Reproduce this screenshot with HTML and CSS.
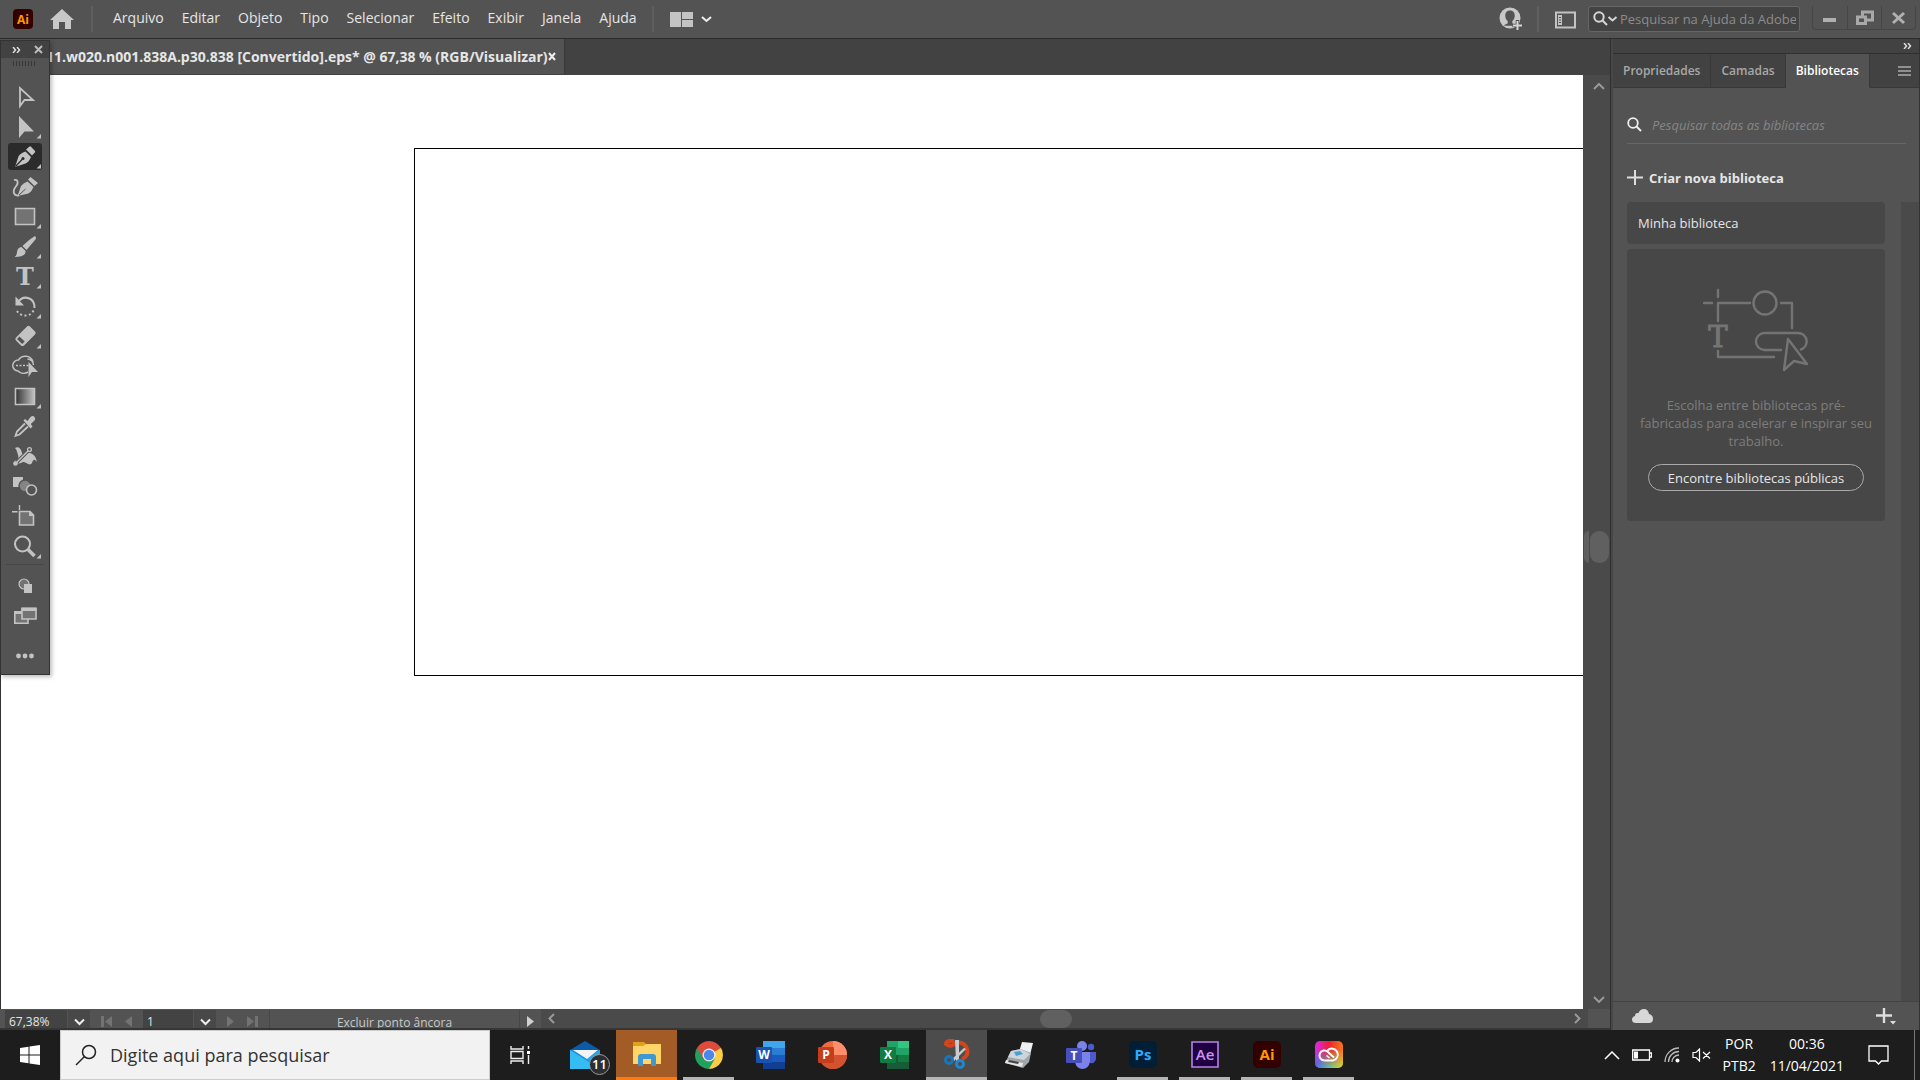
FILE: index.html
```html
<!DOCTYPE html>
<html lang="pt-BR">
<head>
  <meta charset="UTF-8">
  <title>Adobe Illustrator</title>
  <link rel="stylesheet" href="styles.css">
</head>
<body>
  <header class="app-bar">
    <svg class="app-logo" viewBox="0 0 20 20"><rect width="20" height="20" rx="4" fill="#330000"/><text x="10" y="15" text-anchor="middle" class="logo-text">Ai</text></svg>
    <button class="home-btn" aria-label="Início"><svg width="24" height="20" viewBox="0 0 24 20"><path d="M12 0L24 11H21V20H15V13H9V20H3V11H0Z" fill="#c8c8c8"/></svg></button>
    <span class="divider"></span>
    <nav class="menu">
      <button>Arquivo</button>
      <button>Editar</button>
      <button>Objeto</button>
      <button>Tipo</button>
      <button>Selecionar</button>
      <button>Efeito</button>
      <button>Exibir</button>
      <button>Janela</button>
      <button>Ajuda</button>
    </nav>
    <span class="divider"></span>
    <button class="arrange-btn" aria-label="Organizar documentos">
      <svg width="42" height="15" viewBox="0 0 42 15"><path d="M0 0H11V15H0ZM12 0H23V7H12ZM12 8H23V15H12Z" fill="#c3c3c3"/><path d="M32 5L36.500 9L41 5" fill="none" stroke="#eee" stroke-width="2"/></svg>
    </button>
    <div class="app-bar-right">
      <button class="user-btn" aria-label="Conta">
        <svg width="24" height="24" viewBox="0 0 24 24"><circle cx="11" cy="11" r="10.500" fill="#c8c8c8"/><path d="M11 3.500C7.500 3.500 6 6 6.300 9.500C6.500 12 8 13.500 8.700 14V16C8.500 17 6 17.500 4.500 18.300C6.500 19 15.500 19 17.500 18.300C16 17.500 13.500 17 13.300 16V14C14 13.500 15.500 12 15.700 9.500C16 6 14.500 3.500 11 3.500Z" fill="#535353"/><path d="M18.500 13V24M13.500 18.500H24" stroke="#535353" stroke-width="3.500"/><path d="M18.500 14V23M14 18.500H23" stroke="#d5d5d5" stroke-width="2"/></svg>
      </button>
      <span class="divider"></span>
      <button class="workspace-btn" aria-label="Área de trabalho">
        <svg width="21" height="18" viewBox="0 0 21 18"><path d="M1 1.500H20V16.500H1Z" fill="none" stroke="#c3c3c3" stroke-width="2"/><path d="M3 4H7V14H3Z" fill="#c3c3c3"/><path d="M4 6.500H6M4 9H6M4 11.500H6" stroke="#535353"/></svg>
      </button>
      <label class="help-search">
        <svg width="25" height="16" viewBox="0 0 25 16"><circle cx="6" cy="6" r="4.700" fill="none" stroke="#d5d5d5" stroke-width="2"/><path d="M9.500 9.500L14 14M15.500 6L19.500 9.500L23.500 6" fill="none" stroke="#d5d5d5" stroke-width="2"/></svg>
        <input type="text" placeholder="Pesquisar na Ajuda da Adobe" aria-label="Pesquisar na Ajuda da Adobe">
      </label>
      <div class="window-controls">
        <button aria-label="Minimizar"><svg width="14" height="16" viewBox="0 0 14 16"><path d="M0 10H13" stroke="#b0b0b0" stroke-width="4"/></svg></button>
        <button aria-label="Restaurar"><svg width="18" height="16" viewBox="0 0 18 16"><path d="M6.500 2H16.500V10H6.500Z" fill="none" stroke="#a8a8a8" stroke-width="3"/><path d="M1.500 7H9.500V13.500H1.500Z" fill="#535353" stroke="#a8a8a8" stroke-width="3"/></svg></button>
        <button aria-label="Fechar"><svg width="14" height="14" viewBox="0 0 14 14"><path d="M1 2L12 12M12 2L1 12" stroke="#b0b0b0" stroke-width="3"/></svg></button>
      </div>
    </div>
  </header>

  <main class="workspace">
    <section class="document">
      <div class="doc-tabs">
        <div class="doc-tab">
          <span class="doc-title">011.w020.n001.838A.p30.838 [Convertido].eps* @ 67,38 % (RGB/Visualizar)</span>
          <button aria-label="Fechar documento"><svg width="8" height="9" viewBox="0 0 8 9"><path d="M1 1L7 8M7 1L1 8" stroke="#eee" stroke-width="2"/></svg></button>
        </div>
      </div>
      <div class="doc-body">
        <div class="canvas"><div class="artboard"></div></div>
        <div class="scroll-v">
          <svg width="12" height="7" viewBox="0 0 12 7"><path d="M1 6L6 1L11 6" fill="none" stroke="#999" stroke-width="2"/></svg>
          <div class="thumb-v"><i></i><b></b></div>
          <svg width="12" height="7" viewBox="0 0 12 7"><path d="M1 1L6 6L11 1" fill="none" stroke="#999" stroke-width="2"/></svg>
        </div>
      </div>
      <div class="status-bar">
        <input class="zoom-level" type="text" value="67,38%" aria-label="Zoom">
        <button class="drop" aria-label="Níveis de zoom"><svg width="11" height="8" viewBox="0 0 11 8"><path d="M1 1.500L5.500 6L10 1.500" fill="none" stroke="#eee" stroke-width="2"/></svg></button>
        <div class="nav-prev">
          <button aria-label="Primeira"><svg width="11" height="11" viewBox="0 0 11 11"><path d="M0 0H3V11H0ZM11 0V11L4 5.500Z" fill="#737373"/></svg></button>
          <button aria-label="Anterior"><svg width="7" height="11" viewBox="0 0 7 11"><path d="M7 0V11L0 5.500Z" fill="#737373"/></svg></button>
        </div>
        <input class="page-number" type="text" value="1" aria-label="Prancheta">
        <button class="drop" aria-label="Pranchetas"><svg width="11" height="8" viewBox="0 0 11 8"><path d="M1 1.500L5.500 6L10 1.500" fill="none" stroke="#eee" stroke-width="2"/></svg></button>
        <div class="nav-next">
          <button aria-label="Próxima"><svg width="7" height="11" viewBox="0 0 7 11"><path d="M0 0V11L7 5.500Z" fill="#737373"/></svg></button>
          <button aria-label="Última"><svg width="11" height="11" viewBox="0 0 11 11"><path d="M8 0H11V11H8ZM0 0V11L7 5.500Z" fill="#737373"/></svg></button>
        </div>
        <span class="status-text">Excluir ponto âncora</span>
        <button class="status-more" aria-label="Mais"><svg width="7" height="11" viewBox="0 0 7 11"><path d="M0 0V11L7 5.500Z" fill="#d0d0d0"/></svg></button>
        <div class="scroll-h">
          <svg width="7" height="11" viewBox="0 0 7 11"><path d="M6 1L1.500 5.500L6 10" fill="none" stroke="#999" stroke-width="2"/></svg>
          <div class="thumb-h"></div>
          <svg width="7" height="11" viewBox="0 0 7 11"><path d="M1 1L5.500 5.500L1 10" fill="none" stroke="#999" stroke-width="2"/></svg>
        </div>
        <span class="corner"></span>
      </div>

      <!-- floating tool palette -->
      <aside class="tools">
        <div class="tools-head">
          <svg width="9" height="6" viewBox="0 0 9 6"><path d="M1 0L3.500 3L1 6M5 0L7.500 3L5 6" fill="none" stroke="#ddd" stroke-width="1.500"/></svg>
          <button aria-label="Fechar ferramentas"><svg width="9" height="9" viewBox="0 0 9 9"><path d="M1 1L8 8M8 1L1 8" stroke="#bbb" stroke-width="2"/></svg></button>
        </div>
        <div class="grip"></div>
        <div class="tool-list">
          <button aria-label="Seleção"><svg viewBox="0 0 34 27"><path d="M12 5V23L16.500 17H25Z" fill="none" stroke="#c3c3c3" stroke-width="1.800"/></svg></button>
          <button aria-label="Seleção direta"><svg viewBox="0 0 34 27"><path d="M11 3V25L16.500 18.500H26ZM33 21V25.500H28.500Z" fill="#c3c3c3"/></svg></button>
          <button class="active" aria-label="Caneta"><svg viewBox="0 0 34 27"><path d="M7 24L10.500 13.500Q12 10.500 17.500 8.500L23 14Q21 19 17.500 20.500ZM18 6.500L21.500 3.500Q22.300 3 23 3.700L27 8Q27.500 9 26.800 9.600L24 12.500ZM33 21V25.500H28.500Z" fill="#c3c3c3"/><path d="M7.500 23.500L14.500 16" stroke="#2b2b2b" stroke-width="1.200"/><circle cx="15" cy="15.500" r="1.500" fill="#2b2b2b"/></svg></button>
          <button aria-label="Curvatura"><svg viewBox="0 0 34 27"><path d="M9.500 23L13 13Q15 10 19.500 8.500L25.500 14Q24 18.500 20.500 20.500ZM20 6.500L22.500 4L30 10L26.500 13Z" fill="#c3c3c3"/><path d="M10.500 22.500L17.500 16" stroke="#535353"/><path d="M6 7C10 6 11 10 7.500 14C4 19 6 23 11 22.500" fill="none" stroke="#c3c3c3" stroke-width="1.800"/></svg></button>
          <button aria-label="Retângulo"><svg viewBox="0 0 34 27"><path d="M7.500 5.500H26.500V21.500H7.500Z" fill="#737373" stroke="#c3c3c3" stroke-width="1.600"/><path d="M33 21V25.500H28.500Z" fill="#c3c3c3"/></svg></button>
          <button aria-label="Pincel"><svg viewBox="0 0 34 27"><path d="M27 3Q29 5 27 7L18.500 17L14.500 13Q23 5 27 3ZM13.500 14L17.500 18Q18 24 6.500 24Q9 22.500 9 19Q9.500 14.500 13.500 14ZM33 21V25.500H28.500Z" fill="#c3c3c3"/></svg></button>
          <button class="type-tool" aria-label="Texto"><span>T</span><svg viewBox="0 0 34 27"><path d="M33 21V25.500H28.500Z" fill="#c3c3c3"/></svg></button>
          <button aria-label="Girar"><svg viewBox="0 0 34 27"><path d="M10 9C16 1 27 5 26.500 15" fill="none" stroke="#c3c3c3" stroke-width="2"/><path d="M7.500 3.500V12.500H16Z" fill="#c3c3c3"/><path d="M25.500 17.500C22 25 11 24 8 16" fill="none" stroke="#c3c3c3" stroke-width="2" stroke-dasharray="2 2.500"/><path d="M33 21V25.500H28.500Z" fill="#c3c3c3"/></svg></button>
          <button aria-label="Borracha"><svg viewBox="0 0 34 27"><path d="M19 3.500Q20.500 2 22 3.500L27 8.500Q28.500 10 27 11.500L16 22.500Q14.500 23.500 13 22.500L8 17.500Q6.500 16 8 14.500ZM33 21V25.500H28.500Z" fill="#c3c3c3"/><path d="M11.500 13.500L9 16L14.200 21L16.700 18.500Z" fill="#535353"/></svg></button>
          <button aria-label="Construtor de formas"><svg viewBox="0 0 34 27"><path d="M19.500 6A6 6 0 0 1 25.500 12M20 19A8 8 0 0 1 10 18A5.500 5.500 0 1 1 10.500 7A8 8 0 0 1 25 9" fill="none" stroke="#c3c3c3" stroke-width="1.500"/><path d="M8 12.500H21" stroke="#c3c3c3" stroke-width="1.500" stroke-dasharray="2 1.500"/><path d="M20.500 9V24L24 19H30Z" fill="#c3c3c3"/></svg></button>
          <button aria-label="Gradiente"><svg viewBox="0 0 34 27"><defs><linearGradient id="grad"><stop stop-color="#333"/><stop offset="1" stop-color="#c3c3c3"/></linearGradient></defs><path d="M7.500 5.500H26.500V21.500H7.500Z" fill="url(#grad)" stroke="#c3c3c3" stroke-width="1.600"/><path d="M33 21V25.500H28.500Z" fill="#c3c3c3"/></svg></button>
          <button aria-label="Conta-gotas"><svg viewBox="0 0 34 27"><path d="M17 10.500L9 18.500L7.500 22.800L11.500 21.500L20 13.500" fill="none" stroke="#c3c3c3" stroke-width="1.800"/><path d="M15.500 7.500L17 6L19.500 8L22.500 4Q25 2 26.500 4Q28 6 26.500 7.500L22.800 11L24.500 13.500L22.500 15.500Z" fill="#c3c3c3"/></svg></button>
          <button aria-label="Distorção de marionete"><svg viewBox="0 0 34 27"><path d="M7 5C11 3 13 6 14 10C15 13 18 9 22 10C26 11 28 14 29 19C26 15 25 17 24 20C21 24 18 18 15 19C12 21 9 21 6 18C10 18 11 15 10 12C9 9 9 7 7 5Z" fill="#c3c3c3"/><path d="M8 20L21 7" stroke="#535353" stroke-width="3.500"/><path d="M8 20L21 7" stroke="#c3c3c3" stroke-width="1.500"/><circle cx="7.500" cy="20.500" r="2.300" fill="#c3c3c3"/><circle cx="21.500" cy="6.500" r="1.900" fill="#535353" stroke="#c3c3c3" stroke-width="1.300"/></svg></button>
          <button aria-label="Mesclagem"><svg viewBox="0 0 34 27"><path d="M5 4H15V14H5Z" fill="#c3c3c3"/><circle cx="17" cy="13" r="6" fill="#737373" stroke="#535353" stroke-width="1.500"/><circle cx="17" cy="13" r="5" fill="#858585"/><circle cx="23.500" cy="17" r="5" fill="#535353" stroke="#c3c3c3" stroke-width="1.600"/></svg></button>
          <button aria-label="Prancheta"><svg viewBox="0 0 34 27"><path d="M11.500 8.500H22L25.500 12V22H11.500Z" fill="#737373" stroke="#c3c3c3" stroke-width="1.600"/><path d="M21 8V13H26ZM10.800 2H12.200V7H10.800ZM4 8H9.500V9.500H4Z" fill="#c3c3c3"/></svg></button>
          <button aria-label="Zoom"><svg viewBox="0 0 34 27"><circle cx="14.500" cy="11" r="7.500" fill="none" stroke="#c3c3c3" stroke-width="2"/><path d="M20 16.500L26.500 23" stroke="#c3c3c3" stroke-width="3.500"/><path d="M33 21V25.500H28.500Z" fill="#c3c3c3"/></svg></button>
        </div>
        <div class="tool-modes">
          <button aria-label="Modo de desenho"><svg viewBox="0 0 34 27"><circle cx="16" cy="11" r="5" fill="#737373" stroke="#c3c3c3" stroke-width="1.200"/><path d="M16 11H24V20H16Z" fill="#c3c3c3"/></svg></button>
          <button aria-label="Modo de tela"><svg viewBox="0 0 34 27"><path d="M6.800 9V20.200H20V9Z" fill="#737373" stroke="#c3c3c3" stroke-width="1.600"/><path d="M6 8H14V11H6Z" fill="#c3c3c3"/><path d="M14 5.500H28V16H14Z" fill="#737373" stroke="#c3c3c3" stroke-width="1.600"/><path d="M13.500 4.500H28.500V8H13.500Z" fill="#c3c3c3"/></svg></button>
        </div>
        <button class="more-tools" aria-label="Editar barra de ferramentas"><svg viewBox="0 0 34 27"><g fill="#c3c3c3"><circle cx="10.500" cy="13" r="2.400"/><circle cx="17" cy="13" r="2.400"/><circle cx="23.500" cy="13" r="2.400"/></g></svg></button>
      </aside>
    </section>

    <aside class="panel">
      <div class="panel-top"><svg width="9" height="6" viewBox="0 0 9 6"><path d="M1 0L3.500 3L1 6M5 0L7.500 3L5 6" fill="none" stroke="#ddd" stroke-width="1.500"/></svg></div>
      <div class="panel-tabs">
        <button>Propriedades</button>
        <button>Camadas</button>
        <button class="selected">Bibliotecas</button>
        <button class="panel-menu" aria-label="Menu do painel"><svg width="13" height="10" viewBox="0 0 13 10"><path d="M0 1H13M0 5H13M0 9H13" stroke="#aaa" stroke-width="1.500"/></svg></button>
      </div>
      <div class="panel-body">
        <label class="library-search">
          <svg width="15" height="15" viewBox="0 0 15 15"><circle cx="6" cy="6" r="4.800" fill="none" stroke="#eee" stroke-width="1.800"/><path d="M9.500 9.500L14 14" stroke="#eee" stroke-width="2"/></svg>
          <input type="text" placeholder="Pesquisar todas as bibliotecas" aria-label="Pesquisar todas as bibliotecas">
        </label>
        <button class="new-library"><svg width="16" height="16" viewBox="0 0 16 16"><path d="M8 0V15M0 7.500H16" stroke="#ddd" stroke-width="2"/></svg>Criar nova biblioteca</button>
        <div class="library-scroll">
          <div class="library-list">
            <button class="library-item">Minha biblioteca</button>
            <div class="discover">
              <svg class="discover-art" width="106" height="84" viewBox="0 0 106 84"><g fill="none" stroke="#747474" stroke-width="2.400" stroke-linecap="round" stroke-linejoin="round"><path d="M15 2V9M1 15H9M15 33V15H47M78 15H89V40M15 63V69H71"/><circle cx="62" cy="15" r="11.500"/><path d="M78 62H61.500A8.500 8.500 0 0 1 61.500 45H95A8.500 8.500 0 0 1 98 61.500"/><path d="M85 51L81 82L91 73L104 76Z"/></g><text x="15" y="59" text-anchor="middle" class="art-type">T</text></svg>
              <p>Escolha entre bibliotecas pré-fabricadas para acelerar e inspirar seu trabalho.</p>
              <button class="find-btn">Encontre bibliotecas públicas</button>
            </div>
          </div>
          <div class="library-track"></div>
        </div>
      </div>
      <div class="panel-footer">
        <svg width="21" height="14" viewBox="0 0 21 14"><path d="M4 14Q0 14 0 10.500Q0 8 3 7Q3 3.500 6.500 4Q8 0 12 0Q16 0 17 5Q21 6 21 10Q21 14 17 14Z" fill="#d8d8d8"/></svg>
        <button aria-label="Adicionar"><svg width="20" height="17" viewBox="0 0 20 17"><path d="M8 0V15M0 7.500H16" stroke="#ddd" stroke-width="2.400"/><path d="M14 13H20L17 16.500Z" fill="#ddd"/></svg></button>
      </div>
    </aside>
  </main>

  <footer class="taskbar">
    <button class="start" aria-label="Iniciar"><svg width="20" height="20" viewBox="0 0 20 20"><path d="M0 3L8.500 1.800V9.500H0ZM9.500 1.600L20 0V9.500H9.500ZM0 10.500H8.500V18.200L0 17ZM9.500 10.500H20V20L9.500 18.400Z" fill="#fff"/></svg></button>
    <label class="task-search">
      <svg width="22" height="22" viewBox="0 0 22 22"><circle cx="14" cy="8" r="6.500" fill="none" stroke="#222" stroke-width="1.500"/><path d="M9.500 12.500L1 21" stroke="#222" stroke-width="1.500"/></svg>
      <input type="text" placeholder="Digite aqui para pesquisar" aria-label="Digite aqui para pesquisar">
    </label>
    <button class="task-view" aria-label="Visão de tarefas"><svg width="20" height="20" viewBox="0 0 20 20"><path d="M1 1V4H13V1M1 19V16H13V19M1 6.500H13V13.500H1ZM18.500 1V4M18.500 10V19" fill="none" stroke="#eee" stroke-width="1.400"/><path d="M17 6H20V9H17Z" fill="#fff"/></svg></button>
    <div class="apps">
      <button class="app" aria-label="Email"><svg width="30" height="28" viewBox="0 0 30 28"><path d="M0 9L15 0L30 9Z" fill="#0a5ca8"/><path d="M0 9H30V28H0Z" fill="#1b93dc"/><path d="M0 9L30 28H0Z" fill="#35bdf3"/><path d="M30 9V28L17 18Z" fill="#29a5e6"/><path d="M3 9H28L17 18Z" fill="#f4f4f4"/></svg><span class="badge">11</span></button>
      <button class="app attention" aria-label="Explorador de Arquivos"><svg width="28" height="24" viewBox="0 0 28 24"><path d="M0 0H11L14 3V6H0Z" fill="#e2a11a"/><path d="M0 4H10L13 2H28V22H0Z" fill="#ffd667"/><path d="M5 24V15Q5 12 8 12H20Q23 12 23 15V24H18V17H10V24Z" fill="#4098d3"/></svg></button>
      <button class="app running" aria-label="Google Chrome"><svg width="28" height="28" viewBox="0 0 28 28"><path d="M14 14L1.900 7A14 14 0 0 1 26.100 7Z" fill="#dc4b3e"/><path d="M14 14L26.100 7A14 14 0 0 1 14 28Z" fill="#fdcd45"/><path d="M14 14V28A14 14 0 0 1 1.900 7Z" fill="#20a25d"/><path d="M14 7H26.100L20 17.500Z" fill="#fdcd45"/><path d="M20 17.500L14 28L8 17.500Z" fill="#20a25d"/><path d="M14 7H26L14 14L8 17L2 7Z" fill="#dc4b3e"/><circle cx="14" cy="14" r="6.500" fill="#eee"/><circle cx="14" cy="14" r="5.200" fill="#4a86ec"/></svg></button>
      <button class="app" aria-label="Word"><svg width="29" height="28" viewBox="0 0 29 28"><path d="M7 0H29V7H7Z" fill="#41a5ee"/><path d="M7 7H29V14H7Z" fill="#2b7cd3"/><path d="M7 14H29V21H7Z" fill="#185abd"/><path d="M7 21H29V28H7Z" fill="#103f91"/><rect y="6" width="16" height="16" rx="1" fill="#1a52b2"/><text x="8" y="18" text-anchor="middle" class="office-letter">W</text></svg></button>
      <button class="app" aria-label="PowerPoint"><svg width="29" height="28" viewBox="0 0 29 28"><circle cx="15" cy="14" r="14" fill="#ed6c47"/><path d="M15 0A14 14 0 0 1 29 14H15Z" fill="#ff8f6b"/><path d="M15 14H29A14 14 0 0 1 1 14Z" fill="#d35230"/><rect y="6" width="16" height="16" rx="1" fill="#c43e1c"/><text x="8" y="18" text-anchor="middle" class="office-letter">P</text></svg></button>
      <button class="app" aria-label="Excel"><svg width="29" height="28" viewBox="0 0 29 28"><path d="M7 0H18V14H7Z" fill="#21a366"/><path d="M18 0H29V7H18Z" fill="#33c481"/><path d="M18 7H29V14H18Z" fill="#21a366"/><path d="M7 14H29V28H7Z" fill="#185c37"/><path d="M18 14H29V21H18Z" fill="#107c41"/><rect y="6" width="16" height="16" rx="1" fill="#107c41"/><text x="8" y="18" text-anchor="middle" class="office-letter">X</text></svg></button>
      <button class="app current" aria-label="Ferramenta de Captura"><svg width="26" height="30" viewBox="0 0 26 30"><path d="M10 2Q2 1 2 5Q7 9 11 4Q20 2 23 10Q25 17 18 20" fill="none" stroke="#d5441b" stroke-width="4"/><path d="M11 1H15V21L12 22ZM22 10L10 22L8 20L20 9Z" fill="#c8ccd0"/><circle cx="5" cy="21" r="3.500" fill="none" stroke="#1976bd" stroke-width="3"/><circle cx="16" cy="25" r="3.500" fill="none" stroke="#2086ce" stroke-width="3"/></svg></button>
      <button class="app" aria-label="Fax e Scanner"><svg width="28" height="26" viewBox="0 0 28 26"><path d="M17 0L28 1L25 13L14 10Z" fill="#f0f0f0"/><path d="M6 9L16 7L26 11L24 20L18 26L0 21Z" fill="#a0a6aa"/><path d="M6 9L16 7L25 12L19 18L3 15Z" fill="#cdd5da"/><path d="M9 10L15 9L18 12L11 14Z" fill="#4b9fd2"/><path d="M1 18L18 21L17 25L0 21Z" fill="#e6e6e6"/><path d="M4 18L14 20L13 22L3 20Z" fill="#444"/></svg></button>
      <button class="app" aria-label="Teams"><svg width="30" height="28" viewBox="0 0 30 28"><circle cx="16" cy="5" r="5" fill="#7b83eb"/><circle cx="25" cy="6" r="3.200" fill="#5059c9"/><path d="M20 11H30V18Q29 23 24 22Q20 21 20 18Z" fill="#5059c9"/><path d="M9 11H24V20Q23 28 16 28Q10 27 9 21Z" fill="#7b83eb"/><rect y="7" width="16" height="15" rx="1" fill="#4650b8"/><text x="8" y="19" text-anchor="middle" class="office-letter">T</text></svg></button>
      <button class="app running" aria-label="Photoshop"><svg width="28" height="28" viewBox="0 0 28 28"><rect width="28" height="27" rx="5" fill="#001e36"/><text x="14" y="19" text-anchor="middle" class="adobe-letter" fill="#31a8ff">Ps</text></svg></button>
      <button class="app running" aria-label="After Effects"><svg width="28" height="28" viewBox="0 0 28 28"><path d="M1 1H27V26H1Z" fill="#1f0040" stroke="#b583e6" stroke-width="1.600"/><text x="14" y="19" text-anchor="middle" class="adobe-letter light" fill="#c994f5">Ae</text></svg></button>
      <button class="app running" aria-label="Illustrator"><svg width="28" height="28" viewBox="0 0 28 28"><rect width="28" height="27" rx="5" fill="#330000"/><text x="14" y="19" text-anchor="middle" class="adobe-letter" fill="#ff9a00">Ai</text></svg></button>
      <button class="app running" aria-label="Creative Cloud"><svg width="28" height="28" viewBox="0 0 28 28"><defs><linearGradient id="ccTop"><stop stop-color="#d62af0"/><stop offset=".5" stop-color="#f02030"/><stop offset="1" stop-color="#f47a1c"/></linearGradient><linearGradient id="ccLow"><stop stop-color="#3a6ef0"/><stop offset=".5" stop-color="#5cc8a0"/><stop offset="1" stop-color="#d8dc30"/></linearGradient><linearGradient id="fade" x2="0" y2="1"><stop offset=".3" stop-color="#fff" stop-opacity="0"/><stop offset="1" stop-color="#fff"/></linearGradient><mask id="low"><rect width="28" height="27" fill="url(#fade)"/></mask></defs><rect width="28" height="27" rx="5" fill="url(#ccTop)"/><rect width="28" height="27" rx="5" fill="url(#ccLow)" mask="url(#low)"/><g fill="none" stroke="#fff" stroke-width="2"><path d="M9.500 19.500A5 5 0 1 1 13 11L19 16.500"/><path d="M9.500 19.500H18A6 6 0 1 0 12.500 9.500"/><path d="M14.500 17L11.500 14.500" stroke-width="1.600"/></g></svg></button>
    </div>
    <div class="tray">
      <svg width="16" height="9" viewBox="0 0 16 9"><path d="M1 8L8 1L15 8" fill="none" stroke="#fff" stroke-width="1.500"/></svg>
      <svg width="20" height="12" viewBox="0 0 20 12"><path d="M.7 1H17.500V11H.7ZM18 4H19.500V8H18" fill="none" stroke="#fff" stroke-width="1.300"/><path d="M2 2.500H6V9.500H2Z" fill="#fff"/></svg>
      <svg width="16" height="16" viewBox="0 0 16 16"><g fill="none" stroke="#bbb" stroke-width="1.300"><path d="M1 15A14 14 0 0 1 15 1M4.500 15A10.500 10.500 0 0 1 15 4.500M8 15A7 7 0 0 1 15 8"/></g><circle cx="13.500" cy="13.500" r="2" fill="#fff"/></svg>
      <svg width="19" height="14" viewBox="0 0 19 14"><path d="M1 4.500H4L7.500 1V13L4 9.500H1ZM11 4L18 10.500M18 4L11 10.500" fill="none" stroke="#fff" stroke-width="1.200"/></svg>
      <div class="lang"><span>POR</span><span>PTB2</span></div>
      <div class="clock"><span>00:36</span><span>11/04/2021</span></div>
      <button class="notices" aria-label="Central de ações"><svg width="21" height="20" viewBox="0 0 21 20"><path d="M1 1H20V16H13.500L10.500 19L7.500 16H1Z" fill="none" stroke="#fff" stroke-width="1.300"/></svg></button>
      <span class="show-desktop"></span>
    </div>
  </footer>
</body>
</html>
```
FILE: styles.css
```css
* {
  box-sizing: border-box;
}
body {
  margin: 0;
  height: 100vh;
  display: flex;
  flex-direction: column;
  overflow: hidden;
  background: #535353;
  color: #e6e6e6;
  font-family: "Open Sans", "Noto Sans", sans-serif;
  font-size: 14px;
}
button,
input {
  margin: 0;
  padding: 0;
  border: 0;
  background: none;
  color: inherit;
  font: inherit;
  outline: none;
}
svg {
  display: block;
  flex: none;
}

/* application bar */
.app-bar {
  height: 39px;
  flex: none;
  display: flex;
  align-items: center;
  padding-left: 13px;
  border-bottom: 1px solid #2b2b2b;
}
.app-logo {
  width: 20px;
  height: 20px;
}
.logo-text {
  fill: #ff9a00;
  font-size: 12px;
  font-weight: 700;
}
.home-btn {
  margin: 0 17px 0 17px;
}
.divider {
  width: 2px;
  height: 26px;
  background: #5f5f5f;
}
.menu {
  display: flex;
  gap: 18px;
  margin: 0 15px 4px 20px;
}
.arrange-btn {
  margin-left: 16px;
}
.app-bar-right {
  display: flex;
  align-items: center;
  margin-left: auto;
}
.user-btn {
  margin-right: 14px;
}
.workspace-btn {
  margin: 2px 12px 0 16px;
}
.help-search {
  display: flex;
  align-items: center;
  gap: 2px;
  width: 212px;
  height: 26px;
  padding: 0 3px 0 4px;
  background: #434343;
  border: 1px solid #666;
  border-radius: 3px;
}
.help-search input {
  flex: 1;
  min-width: 0;
  font-size: 13px;
}
.help-search input::placeholder {
  color: #8c8c8c;
}
.window-controls {
  display: flex;
  align-self: flex-start;
  margin: 0 4px 0 12px;
  border: 1px solid #464646;
  border-top: 0;
  border-radius: 0 0 4px 4px;
}
.window-controls button {
  display: flex;
  align-items: center;
  justify-content: center;
  width: 34px;
  height: 23px;
}
.window-controls button + button {
  border-left: 1px solid #464646;
}

/* document area */
.workspace {
  flex: 1;
  min-height: 0;
  display: flex;
}
.document {
  position: relative;
  flex: 1;
  min-width: 0;
  display: flex;
  flex-direction: column;
  background: #4a4a4a;
  border-right: 1px solid #2f2f2f;
}
.doc-tabs {
  height: 36px;
  flex: none;
  background: #424242;
}
.doc-tab {
  display: flex;
  align-items: center;
  justify-content: space-between;
  width: 565px;
  height: 35px;
  padding: 0 8px 0 38px;
  background: #535353;
  border-right: 1px solid #383838;
}
.doc-title {
  white-space: nowrap;
  font-size: 14px;
  font-weight: 700;
}
.doc-body {
  flex: 1;
  min-height: 0;
  display: flex;
}
.canvas {
  position: relative;
  flex: 1;
  overflow: hidden;
  background: #fff;
  border-left: 1px solid #333;
}
.artboard {
  position: absolute;
  left: 413px;
  top: 73px;
  right: -10px;
  height: 528px;
  border: 1px solid #000;
}
.scroll-v {
  width: 26px;
  display: flex;
  flex-direction: column;
  align-items: center;
  justify-content: space-between;
  padding: 8px 0 6px;
  margin-right: 1px;
}
.scroll-v svg {
  margin-left: 6px;
}
.thumb-v {
  display: flex;
  gap: 1px;
  margin-top: 8px;
}
.thumb-v i {
  width: 5px;
  height: 32px;
  background: #5f5f5f;
  border-radius: 5px 0 0 5px;
}
.thumb-v b {
  width: 19px;
  height: 32px;
  background: #606060;
  border-radius: 9px;
}

/* status bar */
.status-bar {
  height: 21px;
  flex: none;
  display: flex;
  align-items: flex-end;
  padding-left: 5px;
  overflow: hidden;
  font-size: 12px;
  background: #535353;
  border-bottom: 2px solid #363636;
}
.status-bar > * {
  height: 18px;
  flex: none;
}
.status-bar input {
  padding: 5px 0 0 4px;
  background: #434343;
}
.zoom-level {
  width: 62px;
}
.page-number {
  width: 50px;
}
.drop {
  display: flex;
  align-items: center;
  justify-content: center;
  width: 22px;
  padding-top: 6px;
  margin-left: 1px;
  background: #484848;
}
.nav-prev,
.nav-next {
  display: flex;
  align-items: center;
  justify-content: center;
  gap: 13px;
  width: 53px;
  padding-top: 4px;
}
.status-text {
  flex: 0 0 250px;
  padding-top: 4px;
  line-height: 17px;
  text-align: center;
  color: #c8c8c8;
  border-left: 1px solid #474747;
}
.status-more {
  display: flex;
  align-items: center;
  justify-content: center;
  width: 22px;
  padding-top: 4px;
  border-left: 1px solid #474747;
}
.status-bar .scroll-h {
  flex: 1;
  height: 19px;
  display: flex;
  align-items: center;
  justify-content: space-between;
  padding: 0 7px;
  background: #4a4a4a;
}
.thumb-h {
  width: 32px;
  height: 18px;
  margin-right: 18px;
  background: #606060;
  border-radius: 9px;
}
.corner {
  width: 20px;
  background: #535353;
  margin-right: 2px;
}

/* floating tools */
.tools {
  position: absolute;
  left: 0;
  top: 1px;
  width: 50px;
  height: 635px;
  background: #535353;
  border: 1px solid #333;
  box-shadow: 2px 2px 4px rgba(0, 0, 0, 0.25);
}
.tools-head {
  display: flex;
  align-items: center;
  justify-content: space-between;
  height: 17px;
  padding: 0 6px 0 11px;
  background: #424242;
}
.grip {
  width: 24px;
  height: 5px;
  margin: 3px auto 17px 12px;
  background: repeating-linear-gradient(90deg, #383838 0 1px, #535353 1px 3px);
}
.tools svg[viewBox="0 0 34 27"] {
  width: 34px;
  height: 27px;
}
.tool-list,
.tool-modes {
  display: flex;
  flex-direction: column;
  align-items: flex-start;
  gap: 3px;
  padding-left: 7px;
}
.tool-list button,
.tool-modes button {
  border-radius: 3px;
}
.tool-list .active {
  background: #2b2b2b;
}
.type-tool {
  display: grid;
}
.type-tool > * {
  grid-area: 1 / 1;
}
.type-tool span {
  color: #c3c3c3;
  font-family: "DejaVu Serif", serif;
  font-size: 24px;
  font-weight: 700;
  line-height: 27px;
  text-align: center;
}
.tool-modes {
  margin: 4px 5px 13px;
  padding: 8px 0 0 2px;
  border-top: 1px solid #474747;
}
.more-tools {
  margin-left: 7px;
}

/* library panel */
.panel {
  width: 309px;
  flex: none;
  display: flex;
  flex-direction: column;
  border-left: 2px solid #474747;
  border-right: 1px solid #333;
}
.panel-top {
  height: 15px;
  display: flex;
  align-items: center;
  justify-content: flex-end;
  padding-right: 7px;
  background: #424242;
  border-bottom: 1px solid #2f2f2f;
}
.panel-tabs {
  height: 34px;
  display: flex;
  background: #424242;
  color: #a8a8a8;
  font-size: 12px;
  font-weight: 600;
}
.panel-tabs button {
  padding: 0 10px;
  border-right: 1px solid #383838;
  border-bottom: 1px solid #383838;
}
.panel-tabs .selected {
  background: #535353;
  border-bottom-color: #535353;
  color: #fff;
}
.panel-tabs .panel-menu {
  flex: 1;
  display: flex;
  align-items: center;
  justify-content: flex-end;
  padding-right: 8px;
  border-right: 0;
}
.panel-body {
  flex: 1;
  min-height: 0;
  display: flex;
  flex-direction: column;
  padding-left: 14px;
}
.library-search {
  display: flex;
  align-items: center;
  gap: 10px;
  height: 38px;
  margin: 18px 13px 0 0;
  border-bottom: 1px solid #666;
}
.library-search input {
  flex: 1;
  font-size: 13px;
  font-style: italic;
}
.library-search input::placeholder {
  color: #858585;
}
.new-library {
  display: flex;
  align-items: center;
  gap: 6px;
  height: 20px;
  margin: 24px 0 14px;
  font-size: 13px;
  font-weight: 700;
}
.library-scroll {
  flex: 1;
  display: flex;
  align-items: flex-start;
  justify-content: space-between;
}
.library-list {
  width: 258px;
}
.library-item {
  display: block;
  width: 100%;
  height: 42px;
  margin-bottom: 5px;
  padding-left: 11px;
  text-align: left;
  font-size: 13px;
  background: #474747;
  border-radius: 4px;
}
.discover {
  display: flex;
  flex-direction: column;
  align-items: center;
  padding: 39px 12px 30px;
  text-align: center;
  background: #474747;
  border-radius: 4px;
}
.art-type {
  fill: #747474;
  stroke: #747474;
  stroke-width: 1px;
  font-family: "DejaVu Serif", serif;
  font-size: 29px;
}
.discover p {
  margin: 24px 0 14px;
  color: #7d7d7d;
  font-size: 13px;
  line-height: 18px;
}
.find-btn {
  width: 216px;
  height: 27px;
  border: 1px solid #aaa;
  border-radius: 14px;
  font-size: 13px;
}
.library-track {
  align-self: stretch;
  width: 18px;
  background: #4a4a4a;
}
.panel-footer {
  height: 29px;
  display: flex;
  align-items: center;
  justify-content: space-between;
  padding: 0 23px 0 19px;
  border-top: 1px solid #434343;
}

/* windows taskbar */
.taskbar {
  height: 50px;
  flex: none;
  display: flex;
  background: #1d1d1d;
  color: #fff;
}
.start,
.task-view {
  display: flex;
  align-items: center;
  justify-content: center;
  width: 60px;
}
.task-search {
  display: flex;
  align-items: center;
  gap: 13px;
  width: 430px;
  padding-left: 14px;
  background: #f2f2f2;
  border: 1px solid #ccc;
}
.task-search input {
  flex: 1;
  font-size: 18px;
}
.task-search input::placeholder {
  color: #333;
}
.apps {
  display: flex;
  gap: 1px;
  margin-left: 4px;
}
.app {
  position: relative;
  display: flex;
  align-items: center;
  justify-content: center;
  width: 61px;
}
.app.running::after {
  content: "";
  position: absolute;
  left: 5px;
  right: 5px;
  bottom: 0;
  height: 3px;
  background: #b5b5b5;
}
.app.current {
  background: #4c4c4c;
  border-bottom: 3px solid #b5b5b5;
}
.app.attention {
  background: #a35c26;
  border-bottom: 3px solid #ff7a0d;
}
.badge {
  position: absolute;
  left: 35px;
  top: 24px;
  width: 21px;
  height: 21px;
  line-height: 19px;
  font-size: 13px;
  font-weight: 600;
  background: #2b2f33;
  border: 1px solid #999;
  border-radius: 50%;
}
.office-letter {
  fill: #fff;
  font-size: 12px;
  font-weight: 700;
}
.adobe-letter {
  font-size: 15px;
  font-weight: 700;
}
.adobe-letter.light {
  font-weight: 600;
}
.tray {
  display: flex;
  align-items: center;
  gap: 12px;
  margin-left: auto;
}
.lang,
.clock {
  display: flex;
  flex-direction: column;
  align-items: center;
  font-size: 14px;
  line-height: 22px;
}
.clock {
  margin-left: 2px;
}
.notices {
  margin: 0 13px 0 12px;
}
.show-desktop {
  width: 6px;
  height: 50px;
  border-left: 1px solid #777;
}
```
